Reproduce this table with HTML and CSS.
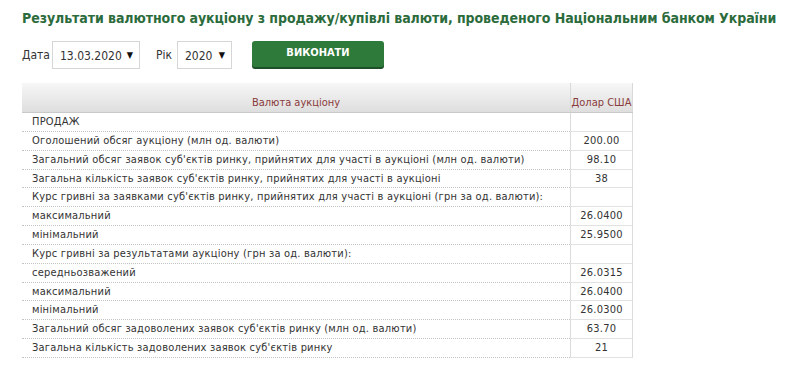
FILE: index.html
```html
<!DOCTYPE html>
<html lang="uk">
<head>
<meta charset="utf-8">
<title>Результати валютного аукціону</title>
<link rel="stylesheet" href="styles.css">
</head>
<body>
<div class="page">
  <h1 class="title">Результати валютного аукціону з продажу/купівлі валюти, проведеного Національним банком України</h1>
  <div class="controls">
    <span class="label">Дата</span>
    <div class="select date"><span>13.03.2020</span><span class="arrow">▼</span></div>
    <span class="label year-label">Рік</span>
    <div class="select year"><span>2020</span><span class="arrow">▼</span></div>
    <button class="run">ВИКОНАТИ</button>
  </div>
  <table class="auction">
    <thead>
      <tr><th class="name-h">Валюта аукціону</th><th class="val-h">Долар США</th></tr>
    </thead>
    <tbody>
      <tr><td class="name">ПРОДАЖ</td><td class="val"></td></tr>
      <tr><td class="name">Оголошений обсяг аукціону (млн од. валюти)</td><td class="val">200.00</td></tr>
      <tr><td class="name">Загальний обсяг заявок суб'єктів ринку, прийнятих для участі в аукціоні (млн од. валюти)</td><td class="val">98.10</td></tr>
      <tr><td class="name">Загальна кількість заявок суб'єктів ринку, прийнятих для участі в аукціоні</td><td class="val">38</td></tr>
      <tr><td class="name">Курс гривні за заявками суб'єктів ринку, прийнятих для участі в аукціоні (грн за од. валюти):</td><td class="val"></td></tr>
      <tr><td class="name">максимальний</td><td class="val">26.0400</td></tr>
      <tr><td class="name">мінімальний</td><td class="val">25.9500</td></tr>
      <tr><td class="name">Курс гривні за результатами аукціону (грн за од. валюти):</td><td class="val"></td></tr>
      <tr><td class="name">середньозважений</td><td class="val">26.0315</td></tr>
      <tr><td class="name">максимальний</td><td class="val">26.0400</td></tr>
      <tr><td class="name">мінімальний</td><td class="val">26.0300</td></tr>
      <tr><td class="name">Загальний обсяг задоволених заявок суб'єктів ринку (млн од. валюти)</td><td class="val">63.70</td></tr>
      <tr><td class="name">Загальна кількість задоволених заявок суб'єктів ринку</td><td class="val">21</td></tr>
    </tbody>
  </table>
</div>
</body>
</html>
```

FILE: styles.css
```css
html, body {
  margin: 0;
  padding: 0;
  background: #ffffff;
}
.page {
  padding: 9px 0 0 22px;
  font-family: "DejaVu Sans Condensed", "DejaVu Sans", sans-serif;
  color: #333333;
}
.title {
  margin: 0;
  font-family: "DejaVu Sans Condensed", "DejaVu Sans", sans-serif;
  font-weight: bold;
  font-size: 14px;
  line-height: 18px;
  letter-spacing: -0.07px;
  color: #2c6b3c;
}
.controls {
  display: flex;
  align-items: center;
  margin-top: 14px;
  height: 28px;
}
.label {
  font-size: 12px;
  color: #333;
}
.select {
  box-sizing: border-box;
  height: 28px;
  border: 1px solid #d6d6d6;
  display: flex;
  align-items: center;
  justify-content: space-between;
  font-size: 12px;
  color: #333;
  padding: 1px 6px 0 7px;
  background: #fff;
}
.select .arrow {
  font-size: 9px;
  color: #111;
  margin-bottom: 2px;
}
.date {
  width: 88px;
  margin-left: 2px;
}
.year-label {
  margin-left: 16px;
}
.year {
  width: 55px;
  margin-left: 5px;
}
.run {
  margin-left: 20px;
  width: 132px;
  height: 26px;
  border: none;
  border-radius: 3px;
  background: #2e7a3b;
  box-shadow: 0 2px 0 #1d5027;
  color: #ffffff;
  font-family: "DejaVu Sans Condensed", "DejaVu Sans", sans-serif;
  font-weight: bold;
  font-size: 11px;
  padding: 0 0 3px;
  margin-bottom: 2px;
}
.auction {
  margin-top: 14px;
  border-collapse: collapse;
  width: 611px;
  font-size: 11px;
}
.auction th {
  height: 26px;
  padding: 0 0 3px;
  vertical-align: bottom;
  font-family: "Liberation Sans Narrow", "DejaVu Sans Condensed", sans-serif;
  font-weight: normal;
  font-size: 11px;
  color: #8a3b3b;
  background: linear-gradient(to bottom, #f7f7f7, #dedede);
  border-bottom: 1px solid #c9c9c9;
}
.auction th.val-h {
  width: 61px;
  border-left: 1px solid #d9d9d9;
  border-right: 1px solid #d9d9d9;
}
.auction td {
  height: 17.85px;
  padding: 0;
  line-height: 17.85px;
  white-space: nowrap;
  letter-spacing: 0.2px;
}
.auction td.name {
  padding-left: 10px;
  border-bottom: 1px dotted #c4c4c4;
}
.auction td.val {
  text-align: center;
  border-left: 1px solid #dcdcdc;
  border-right: 1px solid #dcdcdc;
  border-bottom: 1px solid #e2e2e2;
}
```
